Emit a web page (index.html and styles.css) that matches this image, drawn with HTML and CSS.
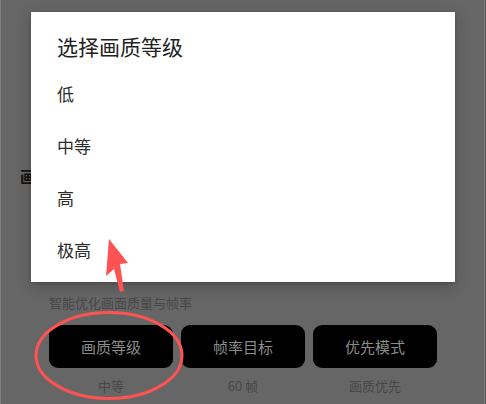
FILE: index.html
```html
<!DOCTYPE html>
<html lang="zh">
<head>
<meta charset="utf-8">
<title>选择画质等级</title>
<link rel="stylesheet" href="styles.css">
</head>
<body>
<div class="screen">
  <div class="page">
    <div class="edge-note">宽</div>
    <h2 class="heading">画质设置</h2>
    <section class="section">
      <p class="desc">智能优化画面质量与帧率</p>
      <div class="options">
        <div class="option">
          <div class="btn">画质等级</div>
          <div class="value">中等</div>
        </div>
        <div class="option">
          <div class="btn">帧率目标</div>
          <div class="value">60 帧</div>
        </div>
        <div class="option">
          <div class="btn">优先模式</div>
          <div class="value">画质优先</div>
        </div>
      </div>
    </section>
  </div>

  <div class="scrim">
    <div class="dialog">
      <div class="dialog-title">选择画质等级</div>
      <ul class="choices">
        <li class="choice">低</li>
        <li class="choice">中等</li>
        <li class="choice">高</li>
        <li class="choice">极高</li>
      </ul>
    </div>
  </div>

  <svg class="annot" width="486" height="404" viewBox="0 0 486 404">
    <ellipse cx="109" cy="355.5" rx="73" ry="43" fill="none" stroke="#ff5252" stroke-width="3"/>
    <polygon points="109,239 128,263 120,264 124,291 120,292 114,269 106,276" fill="#ff5252"/>
  </svg>
</div>
</body>
</html>
```

FILE: styles.css
```css
* { box-sizing: border-box; }

html, body {
  margin: 0;
  padding: 0;
  background: #5c5c5c;
}

body {
  font-family: "Noto Sans CJK SC", "Noto Sans", sans-serif;
}

.screen {
  position: relative;
  width: 485px;
  height: 404px;
  overflow: hidden;
  background: #666666;
  border-left: 1px solid #7e7e7e;
  border-right: 1px solid #7a7a7a;
}

.page {
  display: flex;
  flex-direction: column;
}

.edge-note {
  margin-top: 52px;
  margin-left: -12px;
  font-size: 12px;
  line-height: 18px;
  color: #8a4a4a;
}

.heading {
  margin: 94px 0 0 19px;
  font-size: 16px;
  line-height: 24px;
  font-weight: 700;
  color: #141414;
}

.section {
  margin-top: 106px;
  padding-left: 48px;
}

.desc {
  margin: 0;
  font-size: 13px;
  line-height: 18px;
  color: #474747;
}

.options {
  display: flex;
  gap: 8px;
  margin-top: 13px;
}

.option {
  width: 124px;
  display: flex;
  flex-direction: column;
  align-items: center;
}

.btn {
  width: 124px;
  height: 43px;
  border-radius: 9px;
  background: #000000;
  color: #8c8c8c;
  font-size: 15px;
  display: flex;
  align-items: center;
  justify-content: center;
}

.value {
  margin-top: 9px;
  font-size: 13px;
  line-height: 18px;
  color: #474747;
}

.scrim {
  position: absolute;
  inset: 0;
  padding: 12px 0 0 30px;
}

.dialog {
  width: 424px;
  height: 270px;
  background: #ffffff;
  box-shadow: 0 4px 14px rgba(0, 0, 0, 0.22), 0 1px 3px rgba(0, 0, 0, 0.15);
  padding: 20px 26px 0 26px;
}

.dialog-title {
  font-size: 21px;
  line-height: 28px;
  color: #222222;
}

.choices {
  list-style: none;
  margin: 7px 0 0 0;
  padding: 0;
}

.choice {
  height: 52px;
  display: flex;
  align-items: center;
  font-size: 17px;
  color: #2c2c2c;
}

.annot {
  position: absolute;
  left: -1px;
  top: 0;
  pointer-events: none;
}
```
